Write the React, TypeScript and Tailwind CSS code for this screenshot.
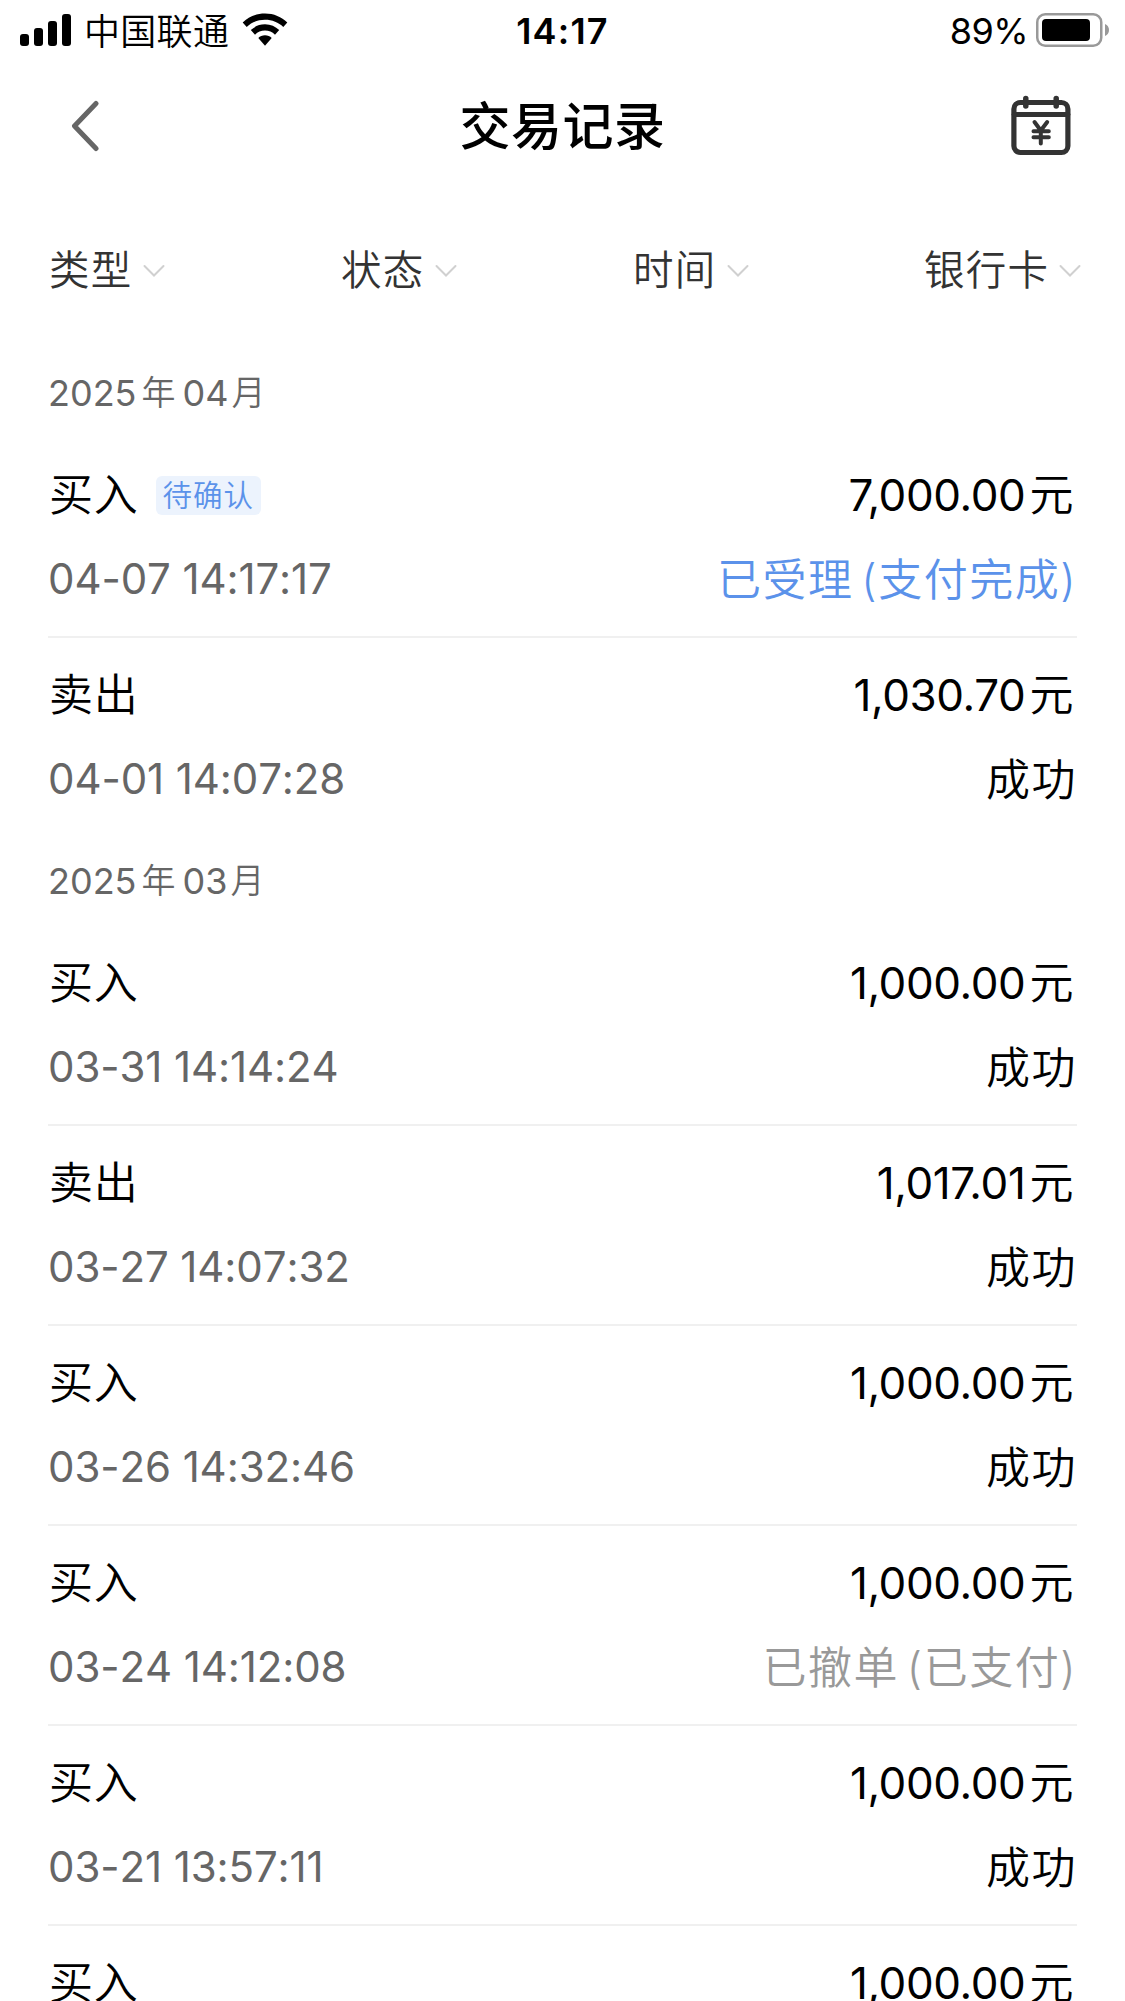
import clsx from 'clsx';

type StatusTone = 'default' | 'pending' | 'cancelled';

interface TradeRecord {
    type: string;
    tag?: string;
    time: string;
    amount: string;
    status: string;
    tone?: StatusTone;
}

interface TradeGroup {
    year: string;
    month: string;
    records: TradeRecord[];
}

const FILTERS = ['类型', '状态', '时间', '银行卡'];

const GROUPS: TradeGroup[] = [
    {
        year: '2025',
        month: '04',
        records: [
            { type: '买入', tag: '待确认', time: '04-07 14:17:17', amount: '7,000.00', status: '已受理 (支付完成)', tone: 'pending' },
            { type: '卖出', time: '04-01 14:07:28', amount: '1,030.70', status: '成功' },
        ],
    },
    {
        year: '2025',
        month: '03',
        records: [
            { type: '买入', time: '03-31 14:14:24', amount: '1,000.00', status: '成功' },
            { type: '卖出', time: '03-27 14:07:32', amount: '1,017.01', status: '成功' },
            { type: '买入', time: '03-26 14:32:46', amount: '1,000.00', status: '成功' },
            { type: '买入', time: '03-24 14:12:08', amount: '1,000.00', status: '已撤单 (已支付)', tone: 'cancelled' },
            { type: '买入', time: '03-21 13:57:11', amount: '1,000.00', status: '成功' },
            { type: '买入', time: '03-20 14:05:36', amount: '1,000.00', status: '成功' },
        ],
    },
];

function SignalIcon() {
    return (
        <svg width="52" height="34" viewBox="0 0 52 34" className="shrink-0">
            <rect x="0" y="21" width="9" height="12" rx="3" />
            <rect x="14" y="15" width="9" height="18" rx="3" />
            <rect x="28" y="8" width="9" height="25" rx="3" />
            <rect x="42" y="1" width="9" height="32" rx="3" />
        </svg>
    );
}

function WifiIcon() {
    return (
        <svg width="46" height="34" viewBox="0 0 46 34" className="ml-[13px] shrink-0">
            <path d="M23 0.5C31.7 0.5 39.6 3.9 45.3 9.5L41.3 14C36.6 9.4 30.2 6.8 23 6.8S9.4 9.4 4.7 14L0.7 9.5C6.4 3.9 14.3 0.5 23 0.5Z" />
            <path d="M23 11.3C28.7 11.3 33.5 13.5 37.2 17.1L33 21.7C30.3 19.1 26.9 17.6 23 17.6S15.7 19.1 13 21.7L8.8 17.1C12.5 13.5 17.3 11.3 23 11.3Z" />
            <path d="M23 22.3C25.7 22.3 28 23.3 29.7 25L23 32.8L16.3 25C18 23.3 20.3 22.3 23 22.3Z" />
        </svg>
    );
}

function BatteryIcon() {
    return (
        <svg width="74" height="34" viewBox="0 0 74 34" className="shrink-0">
            <rect x="1.25" y="1.25" width="64" height="31.5" rx="8" fill="none" stroke="#999" strokeWidth="2.5" />
            <rect x="6" y="6" width="48" height="22" rx="4" />
            <path d="M69 11C71.5 12 73 14.3 73 17S71.5 22 69 23Z" fill="#999" />
        </svg>
    );
}

function CalendarYenIcon() {
    return (
        <svg width="60" height="62" viewBox="0 0 60 62" fill="none" stroke="#333" strokeLinecap="round" strokeLinejoin="round">
            <rect x="2.9" y="7.5" width="54" height="50" rx="6.5" strokeWidth="5.2" />
            <path d="M3 19.5H57" strokeWidth="4.8" />
            <path d="M14.8 3.5V11M45.2 3.5V11" strokeWidth="5.5" />
            <path d="M23.5 27L29.8 35.5L36.2 27M29.8 35.5V48.5M22.5 36.2H37.8M22.5 42.2H37.8" strokeWidth="4" />
        </svg>
    );
}

function StatusBar() {
    return (
        <div className="grid h-[60px] grid-cols-3 items-center pr-[15px] pl-5">
            <div className="flex items-center">
                <SignalIcon />
                <span className="ml-3 pt-[4px] text-[36px] leading-none font-[350] tracking-[0.3px]">中国联通</span>
                <WifiIcon />
            </div>
            <div className="pt-[2px] pr-[5px] text-center text-[36px] leading-none font-[560] tracking-[1.2px]">14:17</div>
            <div className="flex items-center justify-end gap-2">
                <span className="pt-[2px] text-[36px] leading-none tracking-[-0.6px]">89%</span>
                <BatteryIcon />
            </div>
        </div>
    );
}

function NavBar() {
    return (
        <div className="grid h-[132px] grid-cols-[200px_1fr_200px] items-center">
            <svg width="28" height="52" viewBox="0 0 28 52" fill="none" className="ml-[71px]">
                <path d="M25 3.5L3.5 26L25 48.5" stroke="#666" strokeWidth="5" strokeLinecap="round" strokeLinejoin="round" />
            </svg>
            <h1 className="text-center text-[51px] leading-none font-medium tracking-[0.5px]">交易记录</h1>
            <div className="flex justify-end pr-[54px]">
                <CalendarYenIcon />
            </div>
        </div>
    );
}

function FilterBar() {
    return (
        <div className="grid h-[158px] grid-cols-[292px_292px_291px_auto] pl-[49px] text-[#333]">
            {FILTERS.map((label) => (
                <button key={label} className="flex items-center">
                    <span className="text-[40.5px] leading-none font-[350] tracking-[1.3px]">{label}</span>
                    <svg width="22" height="14" viewBox="0 0 22 14" fill="none" className="ml-2.5">
                        <path d="M1.5 2L11 11.5L20.5 2" stroke="#d0d0d0" strokeWidth="2" strokeLinecap="round" />
                    </svg>
                </button>
            ))}
        </div>
    );
}

function RecordRow({ record }: { record: TradeRecord }) {
    const { type, tag, time, amount, status, tone = 'default' } = record;

    return (
        <li className="flex h-[200px] flex-col border-b-2 border-[#f0f0f0] pt-[25px] last:border-transparent">
            <div className="flex h-[64px] items-center justify-between">
                <div className="flex items-center">
                    <span className="pl-px text-[44px] leading-none font-[350] tracking-[0.8px]">{type}</span>
                    {tag && (
                        <span className="ml-[17px] flex h-[39px] items-center rounded-md bg-[#ecf3fd] px-[7px] pt-[2px] text-[29.5px] leading-none font-[350] tracking-[1px] text-[#5b92ea]">
                            {tag}
                        </span>
                    )}
                </div>
                <span className="pr-1 pb-px text-[44px] leading-none font-[380] tracking-[-0.4px]">
                    {amount}
                    <span className="ml-1 font-[350]">元</span>
                </span>
            </div>
            <div className="mt-5 flex h-[64px] items-center justify-between">
                <span className="text-[42px] leading-none font-[370] tracking-[-0.1px] text-[#666] [font-kerning:none]">{time}</span>
                <span
                    className={clsx(
                        'pt-px text-[44px] leading-none font-[350] tracking-[1.5px] [word-spacing:-6px]',
                        tone === 'pending' && 'text-[#5b92ea]',
                        tone === 'cancelled' && 'text-[#999]',
                    )}
                >
                    {status}
                </span>
            </div>
        </li>
    );
}

export default function App() {
    return (
        <div className="h-[2001px] w-[1125px] overflow-hidden bg-white font-['Inter','Noto_Sans_CJK_SC',sans-serif] text-black" lang="zh-CN">
            <StatusBar />
            <NavBar />
            <FilterBar />
            {GROUPS.map((group) => (
                <section key={group.month} className="pr-12 pl-12">
                    <h2 className="flex h-[88px] items-center pb-[2px] text-[36px] leading-none font-[370] text-[#666]">
                        {group.year}
                        <span className="mr-[7px] ml-[5px] text-[34px] font-[350]">年</span>
                        {group.month}
                        <span className="ml-[3px] text-[34px] font-[350]">月</span>
                    </h2>
                    <ul>
                        {group.records.map((record) => (
                            <RecordRow key={record.time} record={record} />
                        ))}
                    </ul>
                </section>
            ))}
        </div>
    );
}
